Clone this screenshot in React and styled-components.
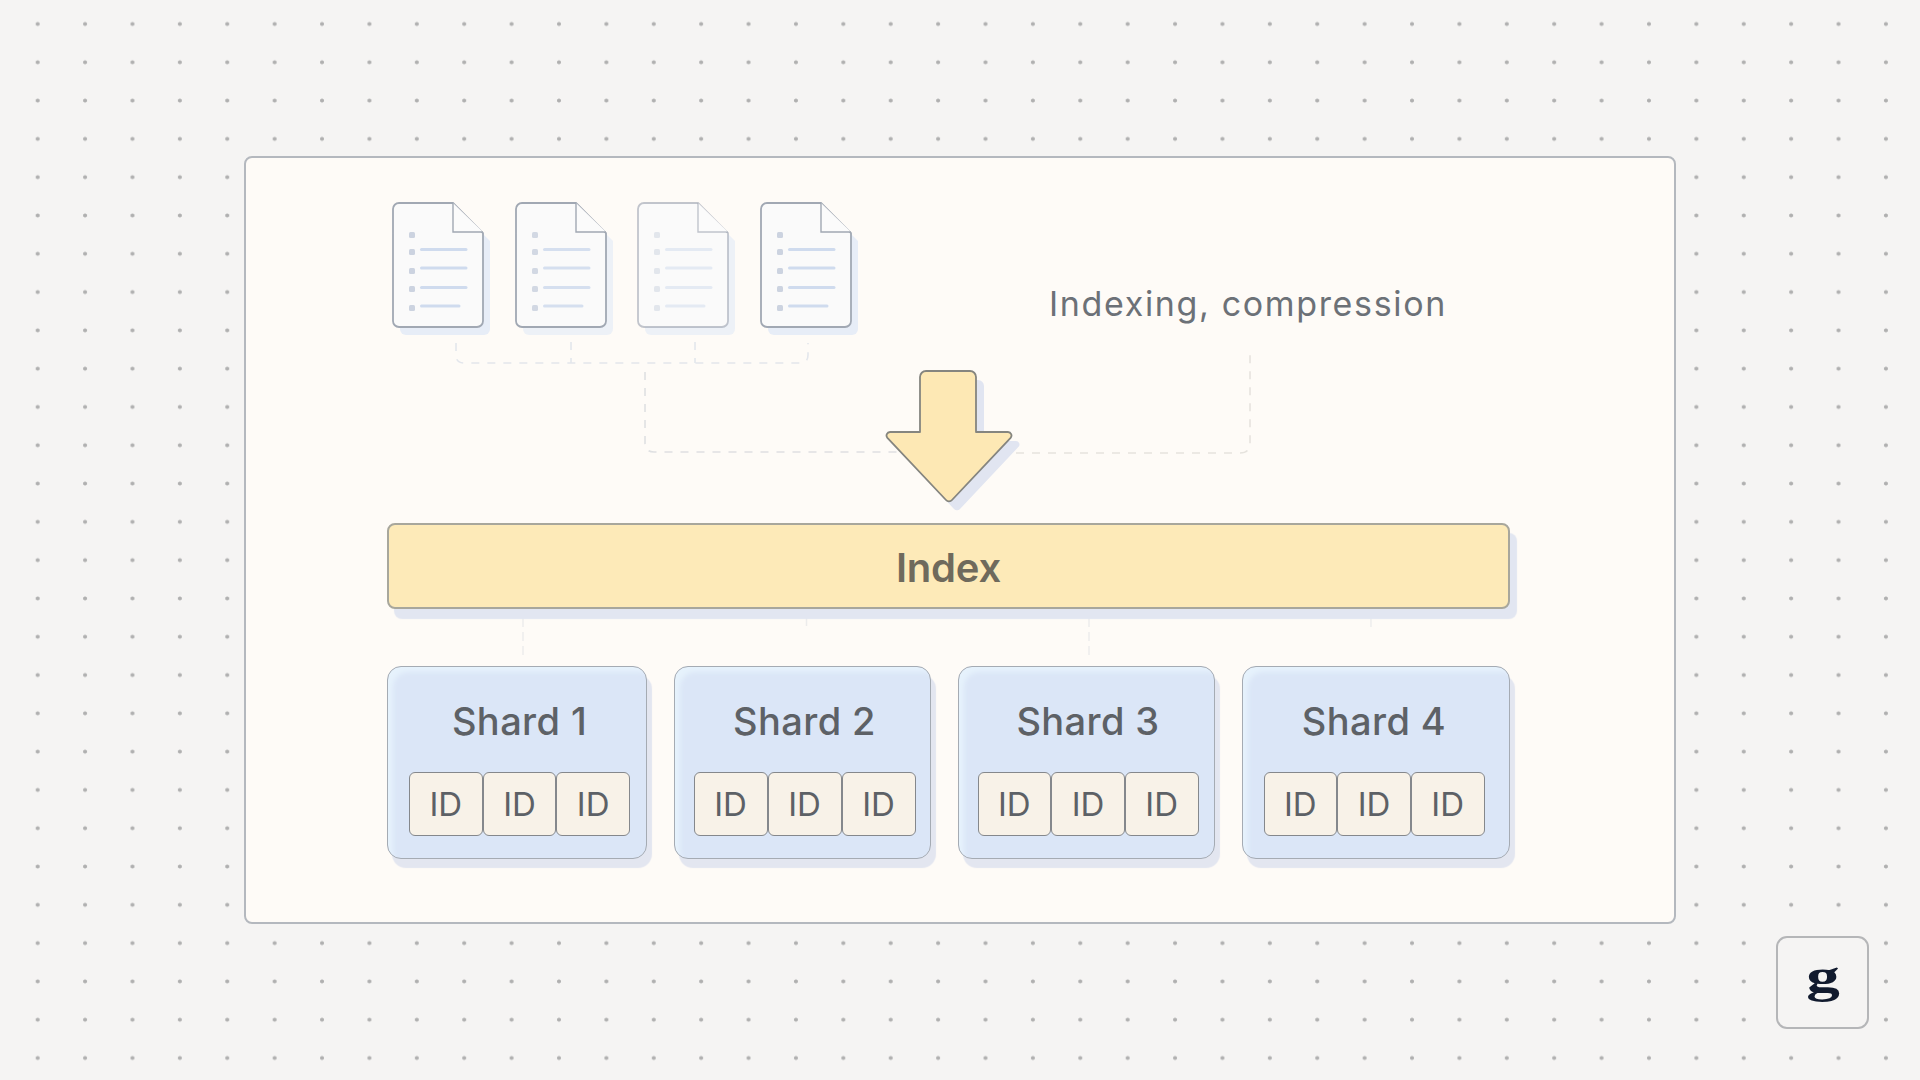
import React from "react"
import styled, { createGlobalStyle } from "styled-components"

const GlobalStyle = createGlobalStyle`
	* {
		box-sizing: border-box;
	}
	html, body {
		margin: 0;
		padding: 0;
	}
	body {
		font-family: Inter, "Open Sans", sans-serif;
		background-color: #f5f4f3;
	}
`

const Page = styled.div`
	position: relative;
	width: 1920px;
	height: 1080px;
	overflow: hidden;
	padding: 156px 0 0 244px;
	background-color: #f5f4f3;
	background-image: radial-gradient(circle, #b0b0b0 0, #b0b0b0 1.6px, transparent 2.3px);
	background-size: 47.4px 38.3px;
	background-position: 14px 4.85px;
`

const Card = styled.div`
	position: relative;
	width: 1432px;
	height: 768px;
	padding: 45px 0 0 141px;
	background-color: #fefbf7;
	border: 2px solid #b4b8be;
	border-radius: 8px;
`

// dashed lines sit under everything else in the card
const Connectors = styled.svg`
	position: absolute;
	inset: 0;
	width: 100%;
	height: 100%;
	overflow: visible;
`

const Content = styled.div`
	position: relative;
	width: 1123px;
`

const TopRow = styled.div`
	display: flex;
	height: 167px;
	padding-left: 6px;
`

const Docs = styled.div`
	display: flex;
	gap: 32.5px;
	width: 656px;
`

const DocIcon = styled.svg`
	display: block;
	width: 90px;
	height: 124px;
	overflow: visible;
	filter: blur(0.4px);
`

const Label = styled.div`
	margin-top: 76px;
	color: #6c7177;
	font-size: 34px;
	letter-spacing: 1.65px;
	line-height: 50px;
	white-space: nowrap;
`

const ArrowRow = styled.div`
	display: flex;
	justify-content: center;
	height: 153px;
`

const ArrowIcon = styled.svg`
	display: block;
	width: 128px;
	height: 134px;
	overflow: visible;
	filter: blur(0.3px);
`

const IndexBar = styled.div`
	display: flex;
	align-items: center;
	justify-content: center;
	height: 86px;
	padding-top: 2px;
	background-color: #fdeab8;
	border: 2px solid #a8a79c;
	border-radius: 8px;
	box-shadow: 7px 10px 1px #e2e6f1;
	color: #6f6a5c;
	font-size: 40px;
	font-weight: 600;
	letter-spacing: -0.2px;
`

const ShardRow = styled.div`
	display: flex;
	justify-content: space-between;
	margin-top: 57px;
`

const Shard = styled.div`
	width: ${(p) => p.$width}px;
	height: 193px;
	padding: 31px ${(p) => p.$right}px 0 ${(p) => p.$left}px;
	background-color: #dbe6f7;
	border: 1.5px solid #a5abb3;
	border-radius: 14px;
	box-shadow: inset 7px 7px 5px -2px #e6f2fc, 5px 9px 1px #e3e6f0;
`

const ShardTitle = styled.div`
	height: 46px;
	margin-bottom: 28px;
	color: #5d6166;
	font-size: 38px;
	font-weight: 500;
	letter-spacing: 0.4px;
	line-height: 46px;
	text-align: center;
`

const IdRow = styled.div`
	display: flex;
	height: 64px;
`

const IdCell = styled.div`
	display: flex;
	flex: 1;
	align-items: center;
	justify-content: center;
	background-color: #f8f2e8;
	border: 1.5px solid #85888c;
	border-radius: 6px;
	color: #5d6166;
	font-size: 33px;
`

const Logo = styled.div`
	position: absolute;
	left: 1776px;
	top: 936px;
	display: flex;
	align-items: center;
	justify-content: center;
	width: 93px;
	height: 93px;
	background-color: #f5f4f3;
	border: 2px solid #b5b6b8;
	border-radius: 11px;
	color: #111a2e;
	font-family: "Liberation Serif", serif;
	font-size: 56px;
	font-weight: 700;
	line-height: 1;
`

const LogoLetter = styled.span`
	display: block;
	transform: translateY(-8px) scale(1.2, 0.88);
`

const docFade = [1, 0.85, 0.5, 1]
const bullets = [32, 49, 68, 86, 105]
const lines = [
	[46.5, 73],
	[65, 73],
	[84.5, 73],
	[103, 66],
]

const shards = [
	{ name: "Shard 1", width: 260, left: 21, right: 16 },
	{ name: "Shard 2", width: 257, left: 18.5, right: 14.5 },
	{ name: "Shard 3", width: 257, left: 18.5, right: 15.5 },
	{ name: "Shard 4", width: 268, left: 20.5, right: 24.5 },
]

const docPath = "M6 0H60L90 30V118a6 6 0 0 1-6 6H6a6 6 0 0 1-6-6V6a6 6 0 0 1 6-6Z"

function Doc({ fade }) {
	return (
		<DocIcon viewBox="0 0 90 124">
			<path d={docPath} fill="#e7edf7" transform="translate(7 8)" opacity={fade < 1 ? 0.75 : 1} />
			<path d={docPath} fill="#fafafa" stroke="#a1a8b3" strokeWidth="1.8" strokeOpacity={fade < 0.6 ? 0.65 : 1} />
			<path d="M60 0V29H90" fill="#fbfbfb" stroke="#a1a8b3" strokeWidth="1.4" strokeOpacity={fade < 0.6 ? 0.65 : 1} />
			<g opacity={fade}>
				{bullets.map((y) => (
					<rect key={y} x="16" y={y - 3} width="6" height="6" rx="1.5" fill="#ccd3e0" />
				))}
				{lines.map(([y, end]) => (
					<line key={y} x1="28.5" x2={end} y1={y} y2={y} stroke="#cfdbee" strokeWidth="3" strokeLinecap="round" />
				))}
			</g>
		</DocIcon>
	)
}

function Arrow() {
	const shape = "M35 7a6 6 0 0 1 6-6H85a6 6 0 0 1 6 6V62H123a3.5 3.5 0 0 1 2.6 5.8L67 130a4 4 0 0 1-6 0L2.4 67.8A3.5 3.5 0 0 1 5 62H35Z"
	return (
		<ArrowIcon viewBox="0 0 128 134">
			<path d={shape} fill="#e1e5f1" transform="translate(8 9)" />
			<path d={shape} fill="#fde8b4" stroke="#85857f" strokeWidth="1.8" strokeLinejoin="round" />
		</ArrowIcon>
	)
}

export default function App() {
	return (
		<Page>
			<GlobalStyle />
			<Card>
				<Connectors viewBox="246 158 1428 764" fill="none">
					<g stroke="#e3e6ec" strokeWidth="1.6" strokeDasharray="8 8">
						<path d="M456 343V355q0 8 8 8H800q8 0 8-8V343" />
						<path d="M571 342V363" />
						<path d="M695 342V363" />
						<path d="M645 372V443q0 9 9 9H900" stroke="#dfe0e2" />
						<path d="M1000 453H1240q10 0 10-10V353" stroke="#e6e3de" />
					</g>
					<g stroke="#ececec" strokeWidth="1.4" strokeDasharray="9 5">
						<path d="M523 618V660" />
						<path d="M806.5 618V626" />
						<path d="M1089 618V660" />
						<path d="M1371 618V630" />
					</g>
				</Connectors>
				<Content>
					<TopRow>
						<Docs>
							{docFade.map((fade, i) => (
								<Doc key={i} fade={fade} />
							))}
						</Docs>
						<Label>Indexing, compression</Label>
					</TopRow>
					<ArrowRow>
						<Arrow />
					</ArrowRow>
					<IndexBar>Index</IndexBar>
					<ShardRow>
						{shards.map((shard) => (
							<Shard key={shard.name} $width={shard.width} $left={shard.left} $right={shard.right}>
								<ShardTitle>{shard.name}</ShardTitle>
								<IdRow>
									<IdCell>ID</IdCell>
									<IdCell>ID</IdCell>
									<IdCell>ID</IdCell>
								</IdRow>
							</Shard>
						))}
					</ShardRow>
				</Content>
			</Card>
			<Logo>
				<LogoLetter>g</LogoLetter>
			</Logo>
		</Page>
	)
}
